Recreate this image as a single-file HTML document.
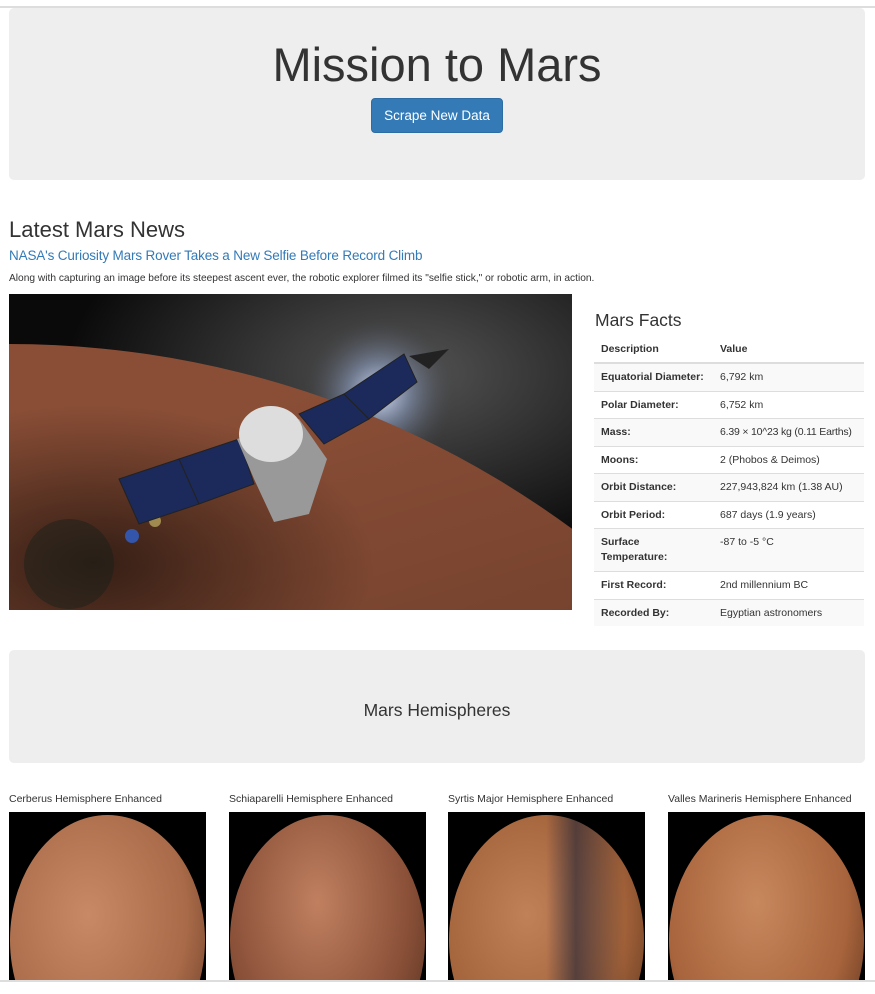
<!DOCTYPE html>
<html><head><meta charset="utf-8"><style>
body{margin:0;background:#fff;font-family:"Liberation Sans",Arial,sans-serif;color:#333;width:875px;height:994px;overflow:hidden;position:relative}
.topline{position:absolute;left:0;top:6px;width:875px;height:2px;background:#ddd}
.jumbo{position:absolute;left:9px;width:856px;background:#eee;border-radius:5px}
h1{position:absolute;margin:0;width:856px;text-align:center;font-weight:400;font-size:47px;top:29px;color:#333}
.btn{position:absolute;left:362px;top:90px;width:130px;height:33px;background:#337ab7;border:1px solid #2e6da4;border-radius:4px;color:#fff;font-size:13.5px;line-height:33px;text-align:center}
.abs{position:absolute;margin:0;white-space:nowrap}
table{border-collapse:collapse;font-size:10.5px;width:270px;table-layout:fixed}
td,th{text-align:left;padding:0 7px;vertical-align:top;white-space:nowrap}
th{height:26px;line-height:26px;border-bottom:2px solid #ddd}
td{border-top:1px solid #ddd;height:26.5px;line-height:26.5px}
tr.s td{background:#f9f9f9}
td:first-child{font-weight:bold}
.hem{position:absolute;top:793px;font-size:10.5px;color:#333;white-space:nowrap}
.hi{position:absolute;top:812px;width:197px;height:168px;background:#000;overflow:hidden}
.hi div{position:absolute;left:1px;top:3px;width:195px;height:250px;border-radius:50%}
.bot{position:absolute;left:0;top:980px;width:875px;height:2px;background:#ddd}
</style></head><body>
<div class="topline"></div>
<div class="jumbo" style="top:8px;height:172px">
<h1>Mission to Mars</h1>
<div class="btn">Scrape New Data</div>
</div>
<div class="abs" style="left:9px;top:217px;font-size:22px">Latest Mars News</div>
<div class="abs" style="left:9px;top:248px;font-size:13.5px;color:#337ab7;letter-spacing:-0.15px">NASA's Curiosity Mars Rover Takes a New Selfie Before Record Climb</div>
<div class="abs" style="left:9px;top:273px;font-size:10.2px">Along with capturing an image before its steepest ascent ever, the robotic explorer filmed its "selfie stick," or robotic arm, in action.</div>
<svg class="abs" style="left:9px;top:294px" width="563" height="316" viewBox="0 0 563 316">
<defs>
<radialGradient id="sky" cx="0.7" cy="0.25" r="0.6"><stop offset="0" stop-color="#555"/><stop offset="1" stop-color="#0a0a0a"/></radialGradient>
<radialGradient id="glow" cx="0.5" cy="0.5" r="0.5"><stop offset="0" stop-color="#dde6ff"/><stop offset="0.4" stop-color="#8899bb" stop-opacity="0.6"/><stop offset="1" stop-color="#333" stop-opacity="0"/></radialGradient>
<linearGradient id="shade" x1="0" y1="0" x2="0.3" y2="1"><stop offset="0.2" stop-color="#000" stop-opacity="0"/><stop offset="1" stop-color="#000" stop-opacity="0.75"/></linearGradient>
<radialGradient id="sh2" cx="0.15" cy="0.85" r="0.5"><stop offset="0" stop-color="#000" stop-opacity="0.6"/><stop offset="1" stop-color="#000" stop-opacity="0"/></radialGradient>
</defs>
<rect width="563" height="316" fill="url(#sky)"/>
<circle cx="370" cy="100" r="80" fill="url(#glow)"/>
<circle cx="0" cy="1000" r="950" fill="#8a4e36"/>
<circle cx="0" cy="1000" r="950" fill="url(#shade)"/>
<rect width="563" height="316" fill="url(#sh2)"/>
<circle cx="60" cy="270" r="45" fill="#1a1f1a" opacity="0.5"/>
<circle cx="123" cy="242" r="7" fill="#3355aa"/>
<circle cx="146" cy="227" r="6" fill="#a08a50"/>
<polygon points="110,185 170,165 190,210 130,230" fill="#1b2a5a" stroke="#222"/>
<polygon points="170,165 230,145 245,190 190,210" fill="#1b2a5a" stroke="#222"/>
<polygon points="290,120 335,100 360,125 315,150" fill="#1b2a5a" stroke="#222"/>
<polygon points="335,100 395,60 408,88 360,125" fill="#1b2a5a" stroke="#222"/>
<polygon points="228,145 290,125 318,165 300,220 265,228 245,185" fill="#999"/>
<ellipse cx="262" cy="140" rx="32" ry="28" fill="#ddd"/>
<polygon points="400,62 440,55 420,75" fill="#222"/>
</svg>
<div class="abs" style="left:595px;top:310px;font-size:17.5px">Mars Facts</div>
<table class="abs" style="left:594px;top:336px">
<colgroup><col style="width:119px"><col style="width:151px"></colgroup>
<tr><th>Description</th><th>Value</th></tr>
<tr class="s"><td>Equatorial Diameter:</td><td>6,792 km</td></tr>
<tr><td>Polar Diameter:</td><td>6,752 km</td></tr>
<tr class="s"><td>Mass:</td><td style="letter-spacing:-0.2px">6.39 × 10^23 kg (0.11 Earths)</td></tr>
<tr><td>Moons:</td><td>2 (Phobos &amp; Deimos)</td></tr>
<tr class="s"><td>Orbit Distance:</td><td>227,943,824 km (1.38 AU)</td></tr>
<tr><td>Orbit Period:</td><td>687 days (1.9 years)</td></tr>
<tr class="s"><td style="line-height:15px;padding-top:6px;height:36px">Surface<br>Temperature:</td><td style="line-height:15px;padding-top:6px">-87 to -5 °C</td></tr>
<tr><td>First Record:</td><td>2nd millennium BC</td></tr>
<tr class="s"><td>Recorded By:</td><td>Egyptian astronomers</td></tr>
</table>
<div class="jumbo" style="top:650px;height:113px"><div class="abs" style="width:856px;text-align:center;top:50px;font-size:17.5px">Mars Hemispheres</div></div>
<div class="hem" style="left:9px">Cerberus Hemisphere Enhanced</div>
<div class="hem" style="left:229px">Schiaparelli Hemisphere Enhanced</div>
<div class="hem" style="left:448px">Syrtis Major Hemisphere Enhanced</div>
<div class="hem" style="left:668px">Valles Marineris Hemisphere Enhanced</div>
<div class="hi" style="left:9px"><div style="background:radial-gradient(ellipse at 40% 40%,#c88a66,#a86a48 60%,#5a3020)"></div></div>
<div class="hi" style="left:229px"><div style="background:radial-gradient(ellipse at 45% 35%,#c08060,#8a5038 60%,#4a2a1a)"></div></div>
<div class="hi" style="left:448px"><div style="background:linear-gradient(90deg,rgba(0,0,0,0) 50%,rgba(30,35,55,.6) 65%,rgba(0,0,0,0) 90%),radial-gradient(ellipse at 40% 40%,#c08058,#a06038 60%,#4a2a1a)"></div></div>
<div class="hi" style="left:668px"><div style="background:radial-gradient(ellipse at 45% 35%,#c8885e,#a8643c 60%,#4a2818)"></div></div>
<div class="bot"></div>
</body></html>
